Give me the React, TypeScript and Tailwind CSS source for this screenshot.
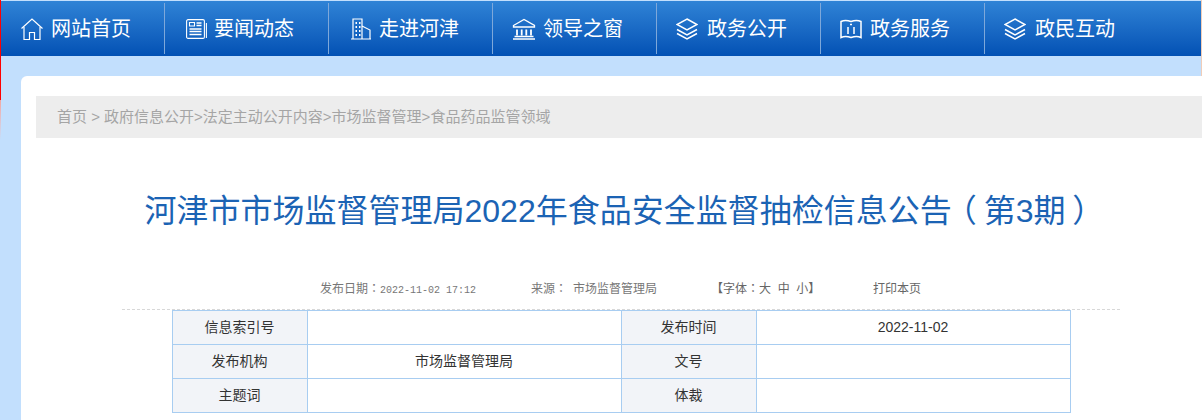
import React from 'react';

const cjk = "font-['Liberation_Sans','Noto_Sans_CJK_SC',sans-serif]";
const tcPunct = "font-['Noto_Sans_CJK_TC',sans-serif] leading-none";
const titleParen = "inline-block w-[32px] text-center font-['Noto_Sans_CJK_SC',sans-serif] leading-none [font-feature-settings:'palt']";

const HomeIcon = () => (
	<svg width="22" height="22" viewBox="0 0 22 22" fill="none" stroke="#fff" strokeWidth="1.2">
		<path d="M.5 10.500 11 1l10.500 9.500" />
		<path d="M3 9v12.500h5.500v-7h5v7H19V9" />
	</svg>
);

const NewsIcon = () => (
	<svg width="21" height="20" viewBox="0 0 21 20" fill="none" stroke="#fff" strokeWidth="1.1">
		<rect x=".6" y=".6" width="17.800" height="18.800" rx="1.500" />
		<path d="M3.500 3.500h5v3.500h-5z" />
		<path d="M10.500 4h5M10.500 6.500h5M3.500 10h12M3.500 12.500h12M3.500 15.500h12" strokeWidth="1.300" />
		<path d="M20.400 4v15" />
	</svg>
);

const BuildingIcon = () => (
	<svg width="22" height="22" viewBox="0 0 22 22" fill="none" stroke="#fff" strokeWidth="1.2">
		<path d="M3 21V1h9v20M12 8l8 4v9M1 21h20" />
		<path d="M5.500 5h1.500M9 5h1.500M5.500 9h1.500M9 9h1.500M5.500 13h1.500M9 13h1.500M5.500 17h1.500M9 17h1.500" strokeWidth="2" />
	</svg>
);

const BankIcon = () => (
	<svg width="24" height="22" viewBox="0 0 24 22" fill="none" stroke="#fff" strokeWidth="1.3">
		<path d="M1.500 7.500 12 1.500l10.500 6v1.500h-21z" />
		<path d="M5 11.500v6M9.700 11.500v6M14.300 11.500v6M19 11.500v6" strokeWidth="1.800" />
		<path d="M2.500 18.500h19M1 21h22" />
	</svg>
);

const LayersIcon = () => (
	<svg width="22" height="22" viewBox="0 0 22 22" fill="none" stroke="#fff" strokeWidth="1.500">
		<path d="M11 1 21 6.500 11 12 1 6.500z" />
		<path d="m1 11.500 10 5.500 10-5.500" />
		<path d="m1 15.500 10 5.500 10-5.500" />
	</svg>
);

const MapIcon = () => (
	<svg width="22" height="22" viewBox="0 0 22 22" fill="none" stroke="#fff" strokeWidth="1.500">
		<path d="M1 3.500c3-1.500 6-1.500 10 0 4-1.500 7-1.500 10 0v16c-3-1.500-6-1.500-10 0-4-1.500-7-1.500-10 0z" />
		<path d="M8 9v7M14 9v7" />
		<path d="M10 6.500h2" />
	</svg>
);

const navItems = [
	{ label: '网站首页', icon: <HomeIcon />, pad: 'pl-[21px]', gap: 'gap-[8px]' },
	{ label: '要闻动态', icon: <NewsIcon />, pad: 'pl-[22px]', gap: 'gap-[7px]' },
	{ label: '走进河津', icon: <BuildingIcon />, pad: 'pl-[22px]', gap: 'gap-[7px]' },
	{ label: '领导之窗', icon: <BankIcon />, pad: 'pl-[20px]', gap: 'gap-[7px]' },
	{ label: '政务公开', icon: <LayersIcon />, pad: 'pl-[20px]', gap: 'gap-[9px]' },
	{ label: '政务服务', icon: <MapIcon />, pad: 'pl-[20px]', gap: 'gap-[8px]' },
	{ label: '政民互动', icon: <LayersIcon />, pad: 'pl-[20px]', gap: 'gap-[9px]' },
];

const rows = [
	['信息索引号', '', '发布时间', '2022-11-02'],
	['发布机构', '市场监督管理局', '文号', ''],
	['主题词', '', '体裁', ''],
];

export default function App() {
	return (
		<div className={`relative h-[420px] w-[1202px] overflow-hidden bg-[#c2dffd] ${cjk}`}>
			{/* edge artefacts of the captured page */}
			<div className="absolute left-0 top-0 h-[100px] w-px bg-[#f00]" />
			<div className="absolute left-0 top-[100px] h-[40px] w-px bg-gradient-to-b from-[#f4a6a0] to-[#c2dffd]" />
			<div className="absolute right-0 top-0 h-[76px] w-px bg-[#f0cdb8]" />

			<div className="mt-px flex h-[55px] bg-gradient-to-b from-[#2f83d6] to-[#0351b4]">
				{navItems.map((item, index) => (
					<div key={item.label} className={`relative flex w-[164px] items-center ${item.pad} ${item.gap}`}>
						{item.icon}
						<span className="text-[20px] leading-none text-white">{item.label}</span>
						{index > 0 && <div className="absolute left-0 top-[2px] h-[51px] w-px bg-[#7ea8da]" />}
					</div>
				))}
			</div>

			<div className="ml-[21px] mt-[20px] h-[400px] rounded-tl-[6px] bg-white pl-[15px] pt-[20px]">
				<div className="h-[42px] bg-[#ededed] pl-[21px] text-[15px] leading-[41px] text-[#a5a5a5]">
					首页 &gt; 政府信息公开&gt;法定主动公开内容&gt;市场监督管理&gt;食品药品监管领域
				</div>

				<div className="ml-[86px] w-[998px]">
					<h1 className="mt-[48px] whitespace-nowrap text-center text-[32px] font-normal leading-[50px] text-[#1b63b4]">
						河津市市场监督管理局2022年食品安全监督抽检信息公告
						<span className={titleParen}>（</span>第3期
						<span className={titleParen}>）</span>
					</h1>

					<div className="mt-[41px] flex h-[24px] items-center whitespace-nowrap pl-[198px] text-[12px] text-[#777]">
						<span className="w-[211px]">
							发布日期<span className={tcPunct}>：</span>
							<span className="font-['Liberation_Mono',monospace] text-[10px]">2022-11-02 17:12</span>
						</span>
						<span className="w-[180px]">
							来源<span className={tcPunct}>：</span>
							<span className="ml-[6px]">市场监督管理局</span>
						</span>
						<span className="w-[162px] text-[#666]">
							【字体<span className={tcPunct}>：</span>大&nbsp;&nbsp;中&nbsp;&nbsp;小】
						</span>
						<span className="text-[#666]">打印本页</span>
					</div>

					<div className="mt-[8px] border-t border-dashed border-[#d8d8d8]">
						<table className="mx-auto w-[898px] table-fixed border-collapse text-center text-[14px] text-[#333]">
							<colgroup>
								<col className="w-[135px]" />
								<col className="w-[314px]" />
								<col className="w-[135px]" />
								<col className="w-[314px]" />
							</colgroup>
							<tbody>
								{rows.map((row) => (
									<tr key={row[0]} className="h-[34px]">
										{row.map((cell, i) => (
											<td
												key={i}
												className={`border border-[#a8cdf1] p-0 ${i % 2 === 0 ? 'bg-[#f2f4f8]' : 'bg-white'}`}
											>
												{cell}
											</td>
										))}
									</tr>
								))}
							</tbody>
						</table>
					</div>
				</div>
			</div>
		</div>
	);
}
